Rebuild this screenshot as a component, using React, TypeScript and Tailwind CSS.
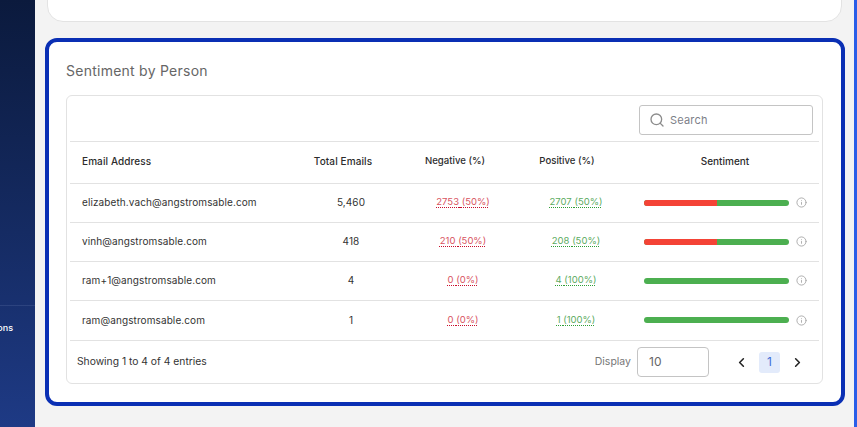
import { ChevronLeft, ChevronRight, Info, Search } from 'lucide-react';

const rows = [
  { email: 'elizabeth.vach@angstromsable.com', total: '5,460', neg: '2753', negPct: '(50%)', pos: '2707', posPct: '(50%)', split: true, height: 'h-[39px]' },
  { email: 'vinh@angstromsable.com', total: '418', neg: '210', negPct: '(50%)', pos: '208', posPct: '(50%)', split: true, height: 'h-[39px]' },
  { email: 'ram+1@angstromsable.com', total: '4', neg: '0', negPct: '(0%)', pos: '4', posPct: '(100%)', split: false, height: 'h-[39px]' },
  { email: 'ram@angstromsable.com', total: '1', neg: '0', negPct: '(0%)', pos: '1', posPct: '(100%)', split: false, height: 'h-[40px]' },
];

const App = () => {
  return (
    <div className="flex h-[427px] w-[857px] overflow-hidden bg-[#f3f3f3] font-['Inter',sans-serif]">
      {/* sidebar */}
      <aside className="flex h-full w-[35px] shrink-0 flex-col overflow-hidden bg-gradient-to-b from-[#0b1a3d] to-[#1e3a85]">
        <div className="mt-[305px] h-[46px] border-t border-[#2c437f] pt-[15px]">
          <div className="flex justify-end pr-[22px] text-[9px] font-medium leading-[14px] text-white">ons</div>
        </div>
      </aside>

      <main className="flex min-w-0 flex-1 flex-col pl-[10px]">
        {/* previous card */}
        <div className="mt-[-20px] ml-[2px] h-[42px] w-[795px] shrink-0 rounded-[16px] border border-[#e3e3e3] bg-white" />

        {/* sentiment */}
        <section className="mt-[16px] flex h-[368px] w-[800px] shrink-0 flex-col rounded-[12px] border-[4px] border-[#0a2fb4] bg-white pl-[17px] pr-[18px]">
          <h2 className="mt-[20px] text-[14px] font-normal leading-[18px] tracking-[0.25px] text-[#666666]">
            Sentiment by Person
          </h2>

          <div className="mt-[15px] flex h-[289px] w-[757px] flex-col rounded-[6px] border border-[#e2e2e2] px-[3px]">
            <div className="flex h-[46px] shrink-0 items-center justify-end border-b border-[#e2e2e2] pr-[6px] pt-[2px]">
              <div className="flex h-[30px] w-[174px] items-center gap-[5px] rounded-[3px] border border-[#c4c4c4] pl-[9px] pt-[1px]">
                <Search size={16} className="text-[#8c8c8c]" />
                <span className="text-[11px] tracking-[0.2px] text-[#7d8088]">Search</span>
              </div>
            </div>

            <div className="flex h-[42px] shrink-0 items-center border-b border-[#e2e2e2] pb-[2px] text-[10px] font-medium text-[#2c2c2c]">
              <div className="w-[231px] pl-[12px] tracking-[0.1px]">Email Address</div>
              <div className="w-[84px] text-center tracking-[0.1px]">Total Emails</div>
              <div className="w-[140px] text-center text-[9.6px]">Negative (%)</div>
              <div className="w-[84px] text-center text-[9.6px]">Positive (%)</div>
              <div className="w-[210px] pl-[22px] text-center">Sentiment</div>
            </div>

            {rows.map((row) => (
              <div key={row.email} className={`flex ${row.height} shrink-0 items-center border-b border-[#e2e2e2] pb-[1px] text-[10px] tracking-[0.1px] text-[#333333]`}>
                <div className="w-[231px] pl-[12px]">{row.email}</div>
                <div className="w-[100px] text-center">{row.total}</div>
                <div className="w-[124px] text-center text-[9.5px] tracking-normal text-[#d8545f]">
                  <span className="underline decoration-dotted decoration-[#c8102e] underline-offset-2">
                    {row.neg} {row.negPct}
                  </span>
                </div>
                <div className="w-[102px] text-center text-[9.5px] tracking-normal text-[#5cab5f]">
                  <span className="underline decoration-dotted decoration-[#2e9e36] underline-offset-2">
                    {row.pos} {row.posPct}
                  </span>
                </div>
                <div className="flex items-center pl-[17px]">
                  <div className="flex h-[6px] w-[145px] overflow-hidden rounded-full bg-[#4caf50]">
                    {row.split && <div className="h-full w-1/2 bg-[#f44336]" />}
                  </div>
                  <Info size={11} className="ml-[7px] text-[#a8a8a8]" />
                </div>
              </div>
            ))}

            <div className="flex min-h-0 flex-1 items-center pl-[7px] pr-[14px]">
              <span className="text-[10.3px] text-[#333333]">Showing 1 to 4 of 4 entries</span>
              <span className="ml-auto text-[10.5px] text-[#777777]">Display</span>
              <div className="ml-[6px] flex h-[30px] w-[72px] items-center rounded-[4px] border border-[#c4c4c4] pl-[11px] text-[12px] text-[#666666]">
                10
              </div>
              <ChevronLeft size={15} strokeWidth={2.5} className="ml-[25px] text-[#222222]" />
              <div className="ml-[10px] flex h-[21px] w-[21px] items-center justify-center rounded-[3px] bg-[#e3ebfb] text-[12px] text-[#3f6fd8]">
                1
              </div>
              <ChevronRight size={15} strokeWidth={2.5} className="ml-[10px] text-[#222222]" />
            </div>
          </div>
        </section>
      </main>

      {/* window edge */}
      <div className="h-full w-[3px] shrink-0 bg-[#2a5de8]" />
    </div>
  );
};

export default App;
